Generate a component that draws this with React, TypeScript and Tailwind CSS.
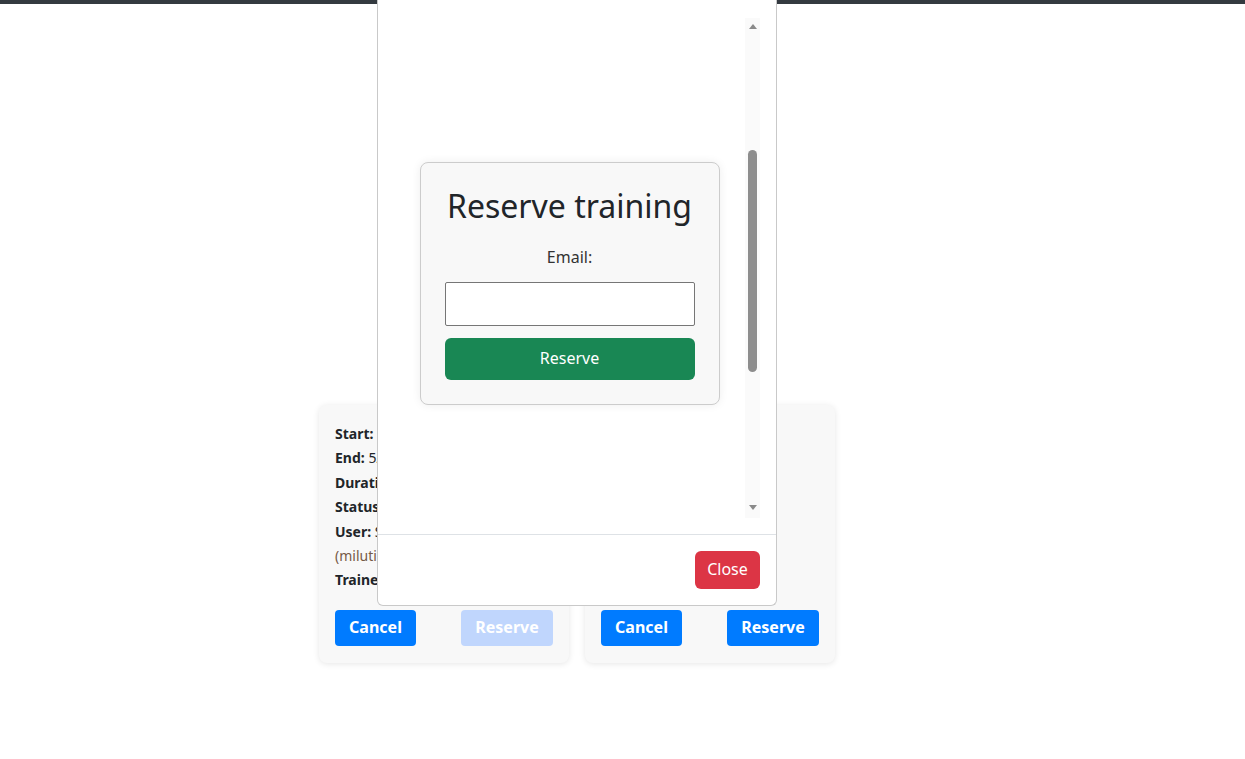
const font = { fontFamily: '"Noto Sans", "Open Sans", sans-serif' };

type Slot = { lines: [string, string][]; reserveDisabled: boolean };

const slots: Slot[] = [
  {
    lines: [
      ["Start:", "5/20/2024, 10:00"],
      ["End:", "5/20/2024, 11:00"],
      ["Duration:", "60 min"],
      ["Status:", "reserved"],
      ["User:", "Stefan"],
      ["Trainer:", "Marko"],
    ],
    reserveDisabled: true,
  },
  {
    lines: [
      ["Start:", "5/21 10:00"],
      ["End:", "5/21 11:00"],
      ["Duration:", "60 min"],
      ["Status:", "free"],
    ],
    reserveDisabled: false,
  },
];

function SlotCard({ slot }: { slot: Slot }) {
  return (
    <div className="flex w-[250px] flex-col rounded-lg bg-[#f8f8f8] px-4 pb-4 pt-[17px] shadow-[0_1px_6px_rgba(0,0,0,0.1)]">
      <div className="text-[14px] leading-[24.4px] text-[#212529]">
        {slot.lines.map(([k, v]) => (
          <p key={k}>
            <b>{k}</b> {v}
            {k === "User:" && (
              <>
                {" "}
                <span className="text-[#765a46]">(milutinovic@mail.com)</span>
              </>
            )}
          </p>
        ))}
      </div>
      <div className="mt-auto flex justify-between pt-[17px]">
        <button className="h-9 w-[81px] rounded bg-[#007bff] pb-px text-base font-bold text-white">
          Cancel
        </button>
        <button
          className={`h-9 w-[92px] rounded pb-px text-base font-bold text-white ${
            slot.reserveDisabled ? "bg-[#c0d6fd]" : "bg-[#007bff]"
          }`}
        >
          Reserve
        </button>
      </div>
      <div className="h-px" />
    </div>
  );
}

function Arrow({ up }: { up?: boolean }) {
  return (
    <div className={`flex h-[15px] items-start justify-center ${up ? "pt-[6px]" : "pt-[2px]"}`}>
      <svg width="8" height="5" viewBox="0 0 8 5" className="block">
        <path d={up ? "M0 5 L4 0 L8 5 Z" : "M0 0 L4 5 L8 0 Z"} fill="#8a8a8a" />
      </svg>
    </div>
  );
}

export default function App() {
  return (
    <div className="relative min-h-[759px] bg-white" style={font}>
      <div className="h-[4px] bg-[#343a40]" />

      <div className="flex w-[1154px] justify-center gap-4 pt-[401px]">
        {slots.map((s, i) => (
          <SlotCard key={i} slot={s} />
        ))}
      </div>

      {/* modal */}
      <div className="absolute left-[377px] top-0 w-[400px] rounded-b-md border border-t-0 border-[#c9c9c9] bg-white">
        <div className="px-4 pb-4 pt-[18px]">
          <div className="flex h-[500px]">
            <div className="flex flex-1 justify-center pt-[144px]">
              <div className="h-fit w-[300px] rounded-lg border border-[#cccccc] bg-[#f8f8f8] p-6 text-center shadow-[0_0_10px_rgba(0,0,0,0.07)]">
                <h2 className="text-[32px] leading-[38px] text-[#212529]">Reserve training</h2>
                <p className="mt-5 text-base leading-6 text-[#333]">Email:</p>
                <input className="mt-[13px] block h-[44px] w-full rounded-[2px] border border-[#767676] bg-white px-2 outline-none" />
                <button className="mt-3 h-[42px] w-full rounded-md bg-[#198754] pb-0.5 text-base text-white">
                  Reserve
                </button>
              </div>
            </div>
            <div className="flex w-[15px] flex-col bg-[#fafafa]">
              <Arrow up />
              <div className="flex-1">
                <div className="mx-[3px] mt-[117px] h-[222px] rounded-full bg-[#8d8d8d]" />
              </div>
              <Arrow />
            </div>
          </div>
        </div>
        <div className="flex justify-end border-t border-[#dee2e6] p-4">
          <button className="h-[38px] w-[65px] rounded-md bg-[#dc3545] pb-0.5 text-base text-white">
            Close
          </button>
        </div>
      </div>
    </div>
  );
}
